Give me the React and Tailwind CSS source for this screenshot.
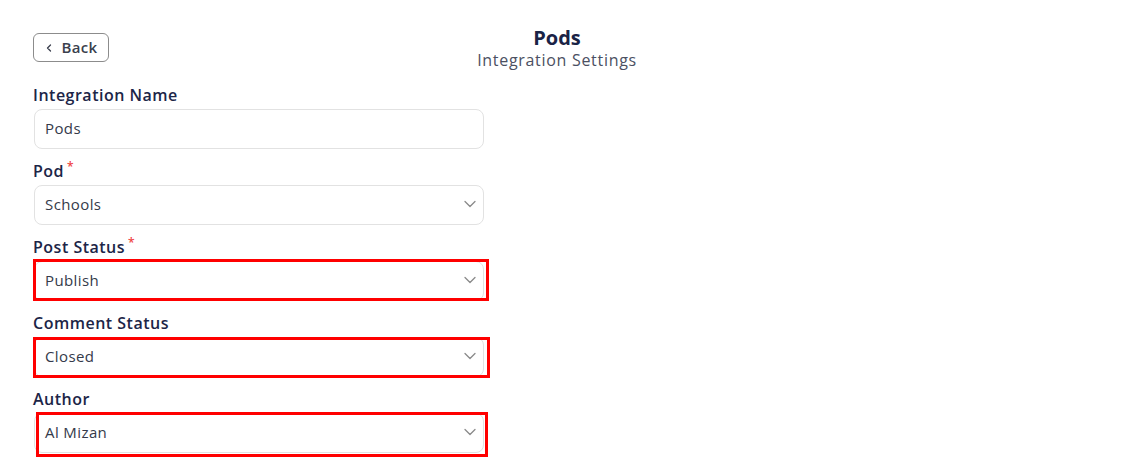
import React from "react";

const font = { fontFamily: '"Open Sans", "Noto Sans", Arial, sans-serif' };

function Chevron() {
  return (
    <svg width="14" height="14" viewBox="0 0 14 14" className="text-[#8a8a8a]">
      <path d="M2 4.5 L7 9.5 L12 4.5" fill="none" stroke="currentColor" strokeWidth="1.3" strokeLinecap="round" strokeLinejoin="round" />
    </svg>
  );
}

function Field({ label, value, required, select, box }) {
  return (
    <div className="flex flex-col">
      <div className="h-5 flex items-center text-[16px] font-semibold text-[#1c2547] leading-5 tracking-[0.5px]">
        {label}
        {required && <span className="text-[#ef4444] ml-[3px] text-[12px] -mt-2">*</span>}
      </div>
      <div className="relative mt-1 ml-px w-[450px]">
        <div className="h-10 w-[450px] rounded-lg border border-[#e2e2e2] bg-white flex items-center justify-between pl-[10px] pr-[6px] pb-[2px] text-[15px] text-[#343a4a] tracking-[0.4px]">
          <span>{value}</span>
          {select && <Chevron />}
        </div>
        {box && <div className={`absolute border-[3px] border-[#ff0000] pointer-events-none ${box}`} />}
      </div>
    </div>
  );
}

export default function App() {
  return (
    <div style={font} className="w-[1124px] h-[466px] bg-white pl-[33px] pr-[43px] pt-[27px] overflow-hidden">
      <div className="grid grid-cols-[1fr_auto_1fr] items-start">
        <div className="mt-[6px]">
          <button className="h-[29px] w-[76px] rounded-md border border-[#8c8c8c] flex items-center justify-center gap-[9px] text-[15px] font-semibold text-[#3a3f4d] tracking-[0.3px]">
            <svg width="8" height="10" viewBox="0 0 8 10"><path d="M5.5 2 L2.5 5 L5.5 8" fill="none" stroke="#3a3f4d" strokeWidth="1.3" strokeLinecap="round" strokeLinejoin="round" /></svg>
            Back
          </button>
        </div>
        <div className="flex flex-col items-center">
          <div className="text-[20px] font-bold leading-[22px] text-[#1a2346]">Pods</div>
          <div className="text-[16px] leading-5 text-[#4b5062] mt-[1px] tracking-[0.7px]">Integration Settings</div>
        </div>
        <div />
      </div>
      <div className="mt-[15px] flex flex-col gap-3 w-[460px]">
        <Field label="Integration Name" value="Pods" />
        <Field label="Pod" value="Schools" required select />
        <Field label="Post Status" value="Publish" required select box="-top-[2px] -left-[1px] -right-[5px] bottom-0" />
        <Field label="Comment Status" value="Closed" select box="top-0 -left-[1px] -right-[6px] -bottom-[1px]" />
        <Field label="Author" value="Al Mizan" select box="-top-[1px] left-[2px] -right-[4px] -bottom-[4px]" />
      </div>
    </div>
  );
}
